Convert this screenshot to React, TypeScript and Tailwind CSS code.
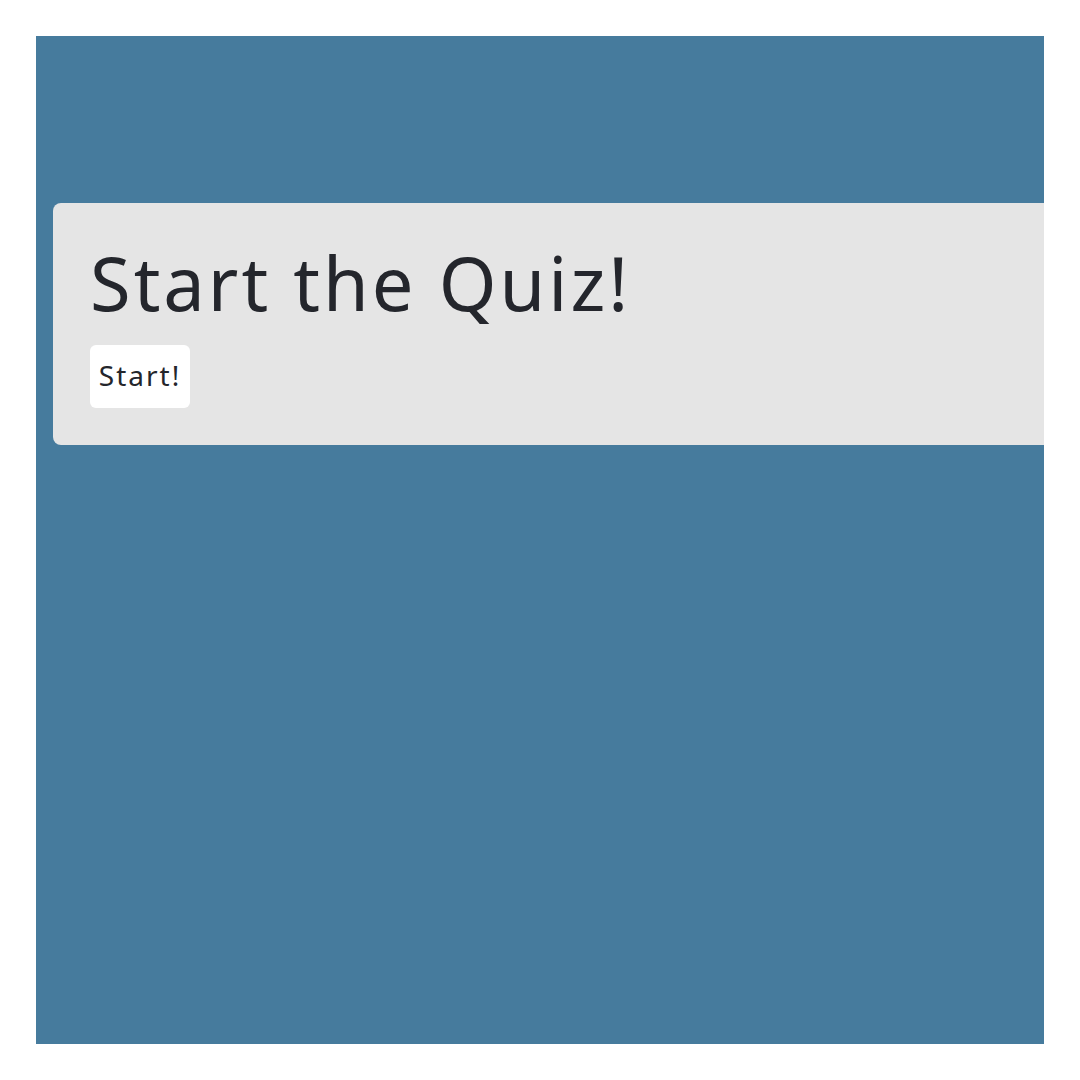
export default function App() {
  return (
    <div className="w-[1080px] h-[1080px] bg-white p-[36px] font-['Noto_Sans',sans-serif]">
      <div className="h-[1008px] w-[1008px] bg-[#467b9d] overflow-hidden pt-[167px] pl-[17px]">
        <div className="w-[1040px] h-[242px] bg-[#e5e5e5] rounded-lg pl-[37px] pt-[35px]">
          <h1 className="text-[74px] leading-[90px] text-[#24262c] tracking-[3px]">Start the Quiz!</h1>
          <button className="mt-[17px] h-[63px] w-[100px] bg-white rounded-md text-[28px] leading-[36px] text-[#24262c] tracking-[2px] pb-[3px]">
            Start!
          </button>
        </div>
      </div>
    </div>
  );
}
